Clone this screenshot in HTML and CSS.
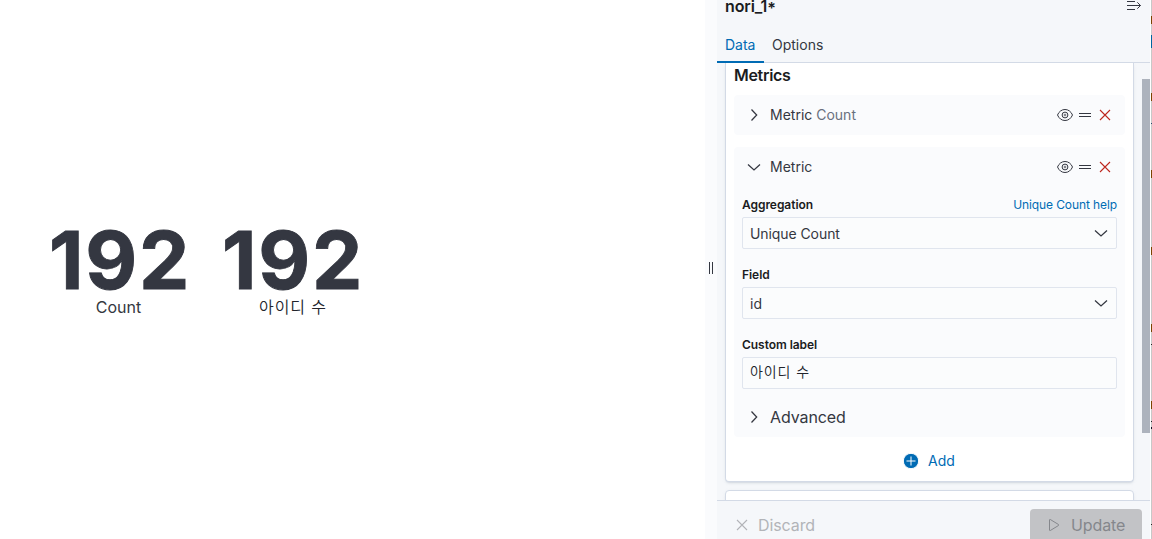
FILE: index.html
```html
<!DOCTYPE html>
<html lang="ko">
<head>
<meta charset="utf-8">
<title>Visualize</title>
<link rel="stylesheet" href="styles.css">
</head>
<body>
<svg width="0" height="0" class="defs">
  <symbol id="right" viewBox="0 0 16 16"><path stroke-width="1.25" d="M5.500 2.500 10.700 8 5.500 13.500"/></symbol>
  <symbol id="down" viewBox="0 0 16 16"><path stroke-width="1.25" d="M2 5.500 8 11l6-5.500"/></symbol>
  <symbol id="eye" viewBox="0 0 16 16"><path d="M.5 8C2 4.500 4.700 2.500 8 2.500S14 4.500 15.500 8C14 11.500 11.300 13.500 8 13.500S2 11.500.5 8Z"/><circle cx="8" cy="8" r="2.900"/><circle cx="8" cy="8" r=".9" stroke-width=".7"/></symbol>
  <symbol id="grab" viewBox="0 0 16 16"><path d="M2 6.500h12M2 9.500h12"/></symbol>
  <symbol id="cross" viewBox="0 0 16 16"><path stroke-width="1.1" d="m3 3 10 10M13 3 3 13"/></symbol>
  <symbol id="menu" viewBox="0 0 16 16"><path d="M1 3.500h8M1 7.500h13.500M1 11.500h8M11.300 4.300l3.200 3.200-3.200 3.200"/></symbol>
  <symbol id="play" viewBox="0 0 16 16"><path d="M3.500 3v10q0 .8.8.5l8.200-5q.7-.5 0-1l-8.200-5q-.8-.3-.8.5Z"/></symbol>
</svg>
<div class="app">
  <main class="vis">
    <div class="metric"><div class="value">192</div><div class="name">Count</div></div>
    <div class="metric"><div class="value">192</div><div class="name hangul">아이디 수</div></div>
  </main>
  <div class="resizer"><i></i><i></i></div>
  <aside class="editor">
    <header class="head">
      <h2 class="title">nori_1<span class="star">*</span></h2>
      <svg class="icon collapse"><use href="#menu"/></svg>
      <nav class="tabs"><a class="tab active">Data</a><a class="tab">Options</a></nav>
    </header>
    <div class="scroll">
      <div class="cards">
        <section class="card">
          <h3 class="heading">Metrics</h3>
          <div class="agg">
            <div class="row"><svg class="icon"><use href="#right"/></svg><span class="label">Metric <span class="muted">Count</span></span>
              <span class="actions"><svg class="icon"><use href="#eye"/></svg><svg class="icon"><use href="#grab"/></svg><svg class="icon danger"><use href="#cross"/></svg></span></div>
          </div>
          <div class="agg open">
            <div class="row"><svg class="icon"><use href="#down"/></svg><span class="label">Metric</span>
              <span class="actions"><svg class="icon"><use href="#eye"/></svg><svg class="icon"><use href="#grab"/></svg><svg class="icon danger"><use href="#cross"/></svg></span></div>
            <div class="field"><div class="caption"><b>Aggregation</b><a class="help">Unique Count help</a></div><div class="control"><span class="choice">Unique Count</span><svg class="icon"><use href="#down"/></svg></div></div>
            <div class="field"><div class="caption"><b>Field</b></div><div class="control"><span>id</span><svg class="icon"><use href="#down"/></svg></div></div>
            <div class="field"><div class="caption"><b>Custom label</b></div><div class="control input"><span class="hangul">아이디 수</span></div></div>
            <div class="row advanced"><svg class="icon"><use href="#right"/></svg><span class="label">Advanced</span></div>
          </div>
          <div class="add"><svg class="plus" viewBox="0 0 16 16"><circle cx="8" cy="8" r="7.700"/><path d="M3.500 8h9M8 3.500v9"/></svg><span>Add</span></div>
        </section>
        <section class="card next"></section>
      </div>
      <div class="track"><div class="thumb"></div></div>
    </div>
    <footer class="foot">
      <span class="discard"><svg class="icon"><use href="#cross"/></svg><span>Discard</span></span>
      <span class="update"><svg class="icon"><use href="#play"/></svg><span>Update</span></span>
    </footer>
  </aside>
  <div class="edge"></div>
</div>
</body>
</html>
```
FILE: styles.css
```css
* { box-sizing: border-box; }
body { margin: 0; overflow: hidden; font: 14px/20px Inter, "Noto Sans CJK KR", sans-serif; color: #343741; background: #fff; }
h2, h3 { margin: 0; }
.defs { position: absolute; }
.icon { display: block; flex: none; width: 16px; height: 16px; fill: none; stroke: currentColor; stroke-width: 1; }
.app { display: flex; width: 1152px; height: 539px; overflow: hidden; }
.vis { display: flex; width: 705px; padding: 222px 0 0 32px; }
.metric { width: 173px; text-align: center; }
.value { padding-left: 3px; font-size: 80px; line-height: 76px; font-weight: 700; letter-spacing: 1.8px; -webkit-text-stroke: 0.9px #343741; }
.name { font-size: 16px; line-height: 24px; margin-top: -3px; }
.hangul { font-weight: 350; letter-spacing: 0.9px; color: #22242c; }
.name.hangul { padding-left: 3px; }
.resizer { display: flex; align-items: center; justify-content: center; gap: 2px; width: 12px; padding-bottom: 3px; background: #fafbfd; }
.resizer i { width: 1px; height: 12px; background: #343741; }
.editor { display: flex; flex-direction: column; width: 433px; background: #f5f7fa; }
.head { display: grid; grid-template-columns: 1fr auto; flex: none; height: 63px; border-bottom: 1px solid #d3dae6; }
.title { height: 27px; padding-left: 8px; font-size: 16px; line-height: 13px; font-weight: 600; letter-spacing: -0.1px; color: #1a1c21; }
.star { display: inline-block; transform: translateY(2px); }
.collapse { margin: -2px 8px 0 0; }
.tabs { grid-column: 1 / 3; display: flex; height: 36px; }
.tab { height: 36px; padding: 8px 8px 0; }
.tab.active { width: 47px; color: #006bb4; border-bottom: 2px solid #006bb4; }
.scroll { display: flex; flex: none; height: 437px; overflow: hidden; }
.cards { width: 425px; padding: 0 8px; }
.card { height: 419px; padding: 2px 8px 0; background: #fff; border: 1px solid #d3dae6; border-top: 0; border-radius: 0 0 4px 4px; box-shadow: 0 2px 2px -1px rgba(152,162,179,.3), 0 1px 5px -2px rgba(152,162,179,.3); }
.card.next { height: 30px; margin-top: 8px; border-top: 1px solid #d3dae6; border-radius: 4px 4px 0 0; }
.heading { height: 30px; font-size: 16px; line-height: 21px; font-weight: 600; letter-spacing: -0.3px; color: #1a1c21; }
.agg { height: 40px; padding: 0 8px; margin-bottom: 12px; border-radius: 4px; background: #fafbfd; }
.agg.open { height: 290px; margin: 0; }
.row { display: flex; align-items: center; height: 40px; padding-left: 4px; }
.label { margin-left: 8px; }
.muted { color: #69707d; }
.actions { display: flex; gap: 4px; margin-left: auto; padding-right: 4px; }
.danger { color: #bd271e; }
.field { height: 70px; padding-top: 8px; }
.caption { display: flex; justify-content: space-between; height: 22px; font-size: 12px; line-height: 20px; }
.caption b { font-weight: 600; letter-spacing: -0.05px; color: #1a1c21; }
.help { color: #006bb4; letter-spacing: -0.1px; }
.choice { letter-spacing: -0.08px; }
.control { display: flex; align-items: center; justify-content: space-between; height: 32px; padding: 1px 7px 0; border: 1px solid #e0e5ee; border-radius: 2px; background: #fbfcfd; }
.control .icon { margin-top: -1px; }
.input { padding: 0 7px 2px; }
.advanced { height: 40px; font-size: 16px; letter-spacing: -0.1px; }
.add { display: flex; align-items: center; justify-content: center; gap: 9px; height: 48px; padding-right: 1px; color: #006bb4; }
.plus { width: 16px; height: 16px; fill: #006bb4; stroke: #fff; stroke-width: 1; }
.track { width: 8px; padding-top: 16px; }
.thumb { height: 354px; background: #adb3bd; }
.foot { display: flex; justify-content: space-between; height: 39px; border-top: 1px solid #d3dae6; padding: 8px 8px 0 17px; font-size: 16px; letter-spacing: -0.1px; }
.discard { display: flex; align-items: center; gap: 8px; height: 32px; color: #b2b4b8; }
.update { display: flex; align-items: center; gap: 9px; width: 112px; height: 40px; padding: 0 0 8px 16px; border-radius: 4px; color: #85878c; background: #c2c3c6; }
.edge { width: 2px; border-left: 1px solid #fff; background: linear-gradient(#c8c8c8 16px, #7b4300 16px 24px, #c8c8c8 24px 35px, #0066a0 35px 48px, #c8c8c8 48px 93px, #7b4300 93px 101px, #c8c8c8 101px 123px, #244a70 123px 124px, #c8c8c8 124px 170px, #7b4300 170px 178px, #c8c8c8 178px 247px, #7b4300 247px 255px, #c8c8c8 255px 324px, #7b4300 324px 332px, #c8c8c8 332px 344px, #222 344px 345px, #c8c8c8 345px 401px, #7b4300 401px 409px, #c8c8c8 409px 421px, #222 421px 422px, #c8c8c8 422px 427px, #112 427px 429px, #c8c8c8 429px 524px, #222 524px 525px, #c8c8c8 525px); }
```
